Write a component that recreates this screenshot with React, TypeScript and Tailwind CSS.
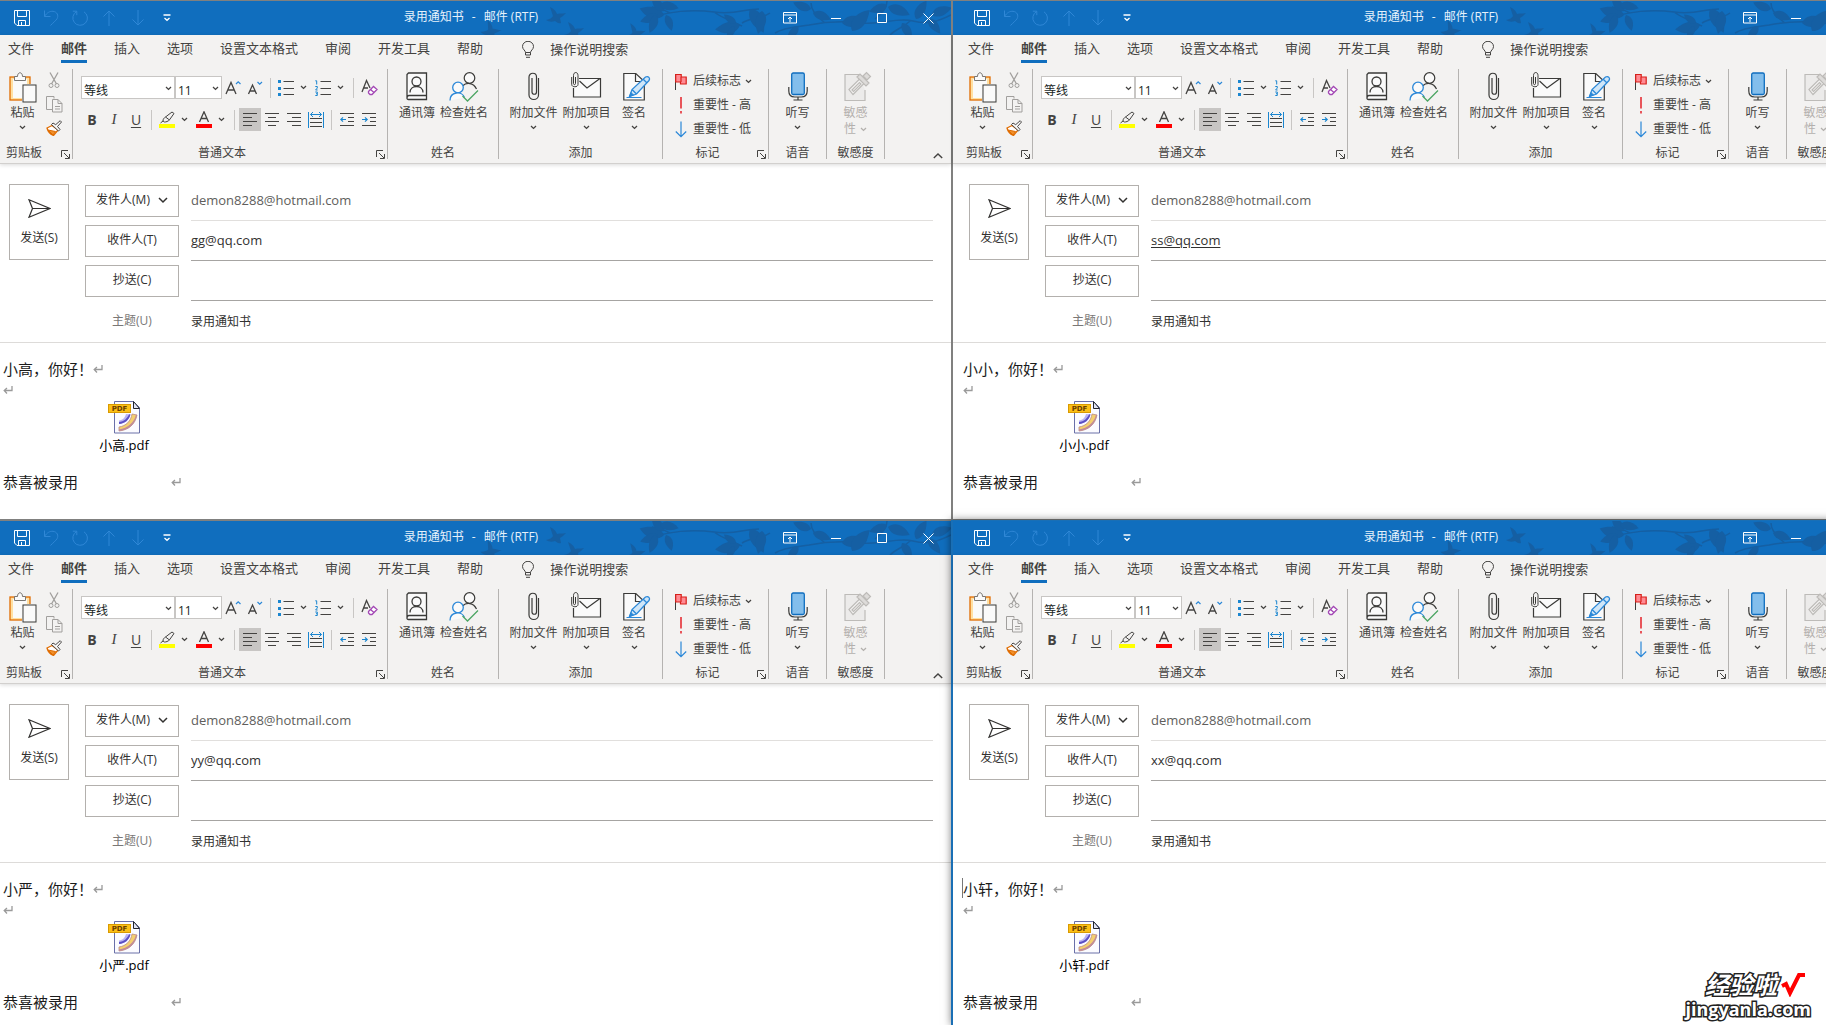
import type { ReactNode } from "react";
import clsx from "clsx";

type Mail = {
  name: string;
  to: string;
  underline?: boolean;
  caret?: boolean;
};

const mails: Mail[] = [
  { name: "小高", to: "gg@qq.com" },
  { name: "小小", to: "ss@qq.com", underline: true },
  { name: "小严", to: "yy@qq.com" },
  { name: "小轩", to: "xx@qq.com", caret: true },
];

const tabs = ["文件", "邮件", "插入", "选项", "设置文本格式", "审阅", "开发工具", "帮助"];

/* ---------- icons ---------- */

type IconProps = { w: number; h: number; className?: string; children: ReactNode };

function Icon({ w, h, className, children }: IconProps) {
  return (
    <svg width={w} height={h} viewBox={`0 0 ${w} ${h}`} fill="none" stroke="currentColor" className={clsx("shrink-0", className)} aria-hidden="true">
      {children}
    </svg>
  );
}

function Chevron({ className }: { className?: string }) {
  return (
    <Icon w={7} h={5} className={className}>
      <path d="M1 1l2.5 2.4L6 1" strokeWidth="1.3" />
    </Icon>
  );
}

function SaveIcon() {
  return (
    <Icon w={16} h={16}>
      <path d="M.5.5h15v15H3L.5 13zM3.5.5v6h9v-6M4.500 15.500v-5h7v5M7.500 12v3.500" />
    </Icon>
  );
}

function UndoIcon() {
  return (
    <Icon w={16} h={16}>
      <path d="M1.500.5v6h6M1.500 6.500C4 2.500 7 1 10 1.300c4 .4 6 4.200 4 7.500-1 1.600-4 4.200-6.500 6.700" />
    </Icon>
  );
}

function RedoIcon() {
  return (
    <Icon w={16} h={16}>
      <path d="M.8 1.200h4v4M4.800 1.500A7.300 7.300 0 1 0 12 1.800" />
    </Icon>
  );
}

function UpIcon() {
  return (
    <Icon w={12} h={16}>
      <path d="M6 16V1M.5 6.500L6 1l5.500 5.500" />
    </Icon>
  );
}

function DownIcon() {
  return (
    <Icon w={12} h={16}>
      <path d="M6 0v15M.5 9.500L6 15l5.500-5.500" />
    </Icon>
  );
}

function CustomizeIcon() {
  return (
    <Icon w={8} h={8}>
      <path d="M.5 1h7M1.500 4L4 6.300 6.500 4" strokeWidth="1.300" />
    </Icon>
  );
}

function BulbIcon() {
  return (
    <Icon w={12} h={17}>
      <path d="M3.500 11.500c0-2-3-3-3-6a5.500 5.200 0 0 1 11 0c0 3-3 4-3 6zM3.500 11.500v2.500h5v-2.500M4 16.300h4" />
    </Icon>
  );
}

function PasteIcon() {
  return (
    <Icon w={28} h={31}>
      <rect x="1" y="5" width="20" height="23" fill="#ffe0a3" stroke="#e06c00" strokeWidth="1.300" />
      <rect x="4" y="7" width="14" height="19" fill="#fafafa" stroke="none" />
      <path d="M5.500 8.500v-4h3c0-5 5-5 5 0h3v4z" fill="#fafafa" stroke="#797774" />
      <rect x="13" y="12" width="15" height="19" fill="#f3f2f1" stroke="none" />
      <rect x="14" y="13" width="13" height="17" fill="#fafafa" stroke="#3a3a38" />
    </Icon>
  );
}

function CutIcon() {
  return (
    <Icon w={12} h={17} className="text-[#a19f9d]">
      <path d="M2 .5l6.500 11.500M10 .5L3.500 12" strokeWidth="1.300" />
      <circle cx="3" cy="13.500" r="2" />
      <circle cx="9" cy="13.500" r="2" />
    </Icon>
  );
}

function CopyIcon() {
  return (
    <Icon w={17} h={17} className="text-[#a19f9d]">
      <path d="M6 13.500H.5V.5h7.500v2" />
      <path d="M6.500 3.500h5.500l4 4v8.500H6.500zM12 3.500v4h4M9 10.500h5M9 13h5" />
    </Icon>
  );
}

function BrushIcon() {
  return (
    <Icon w={16} h={16}>
      <path d="M6 5.500L1 8c1 4 3 6 6.500 7.500L12 10z" fill="#fff" stroke="#e06c00" strokeWidth="1.300" />
      <path d="M2 10l5 5 2.500-3.500z" fill="#f0912d" stroke="#e06c00" />
      <path d="M5.500 4.500l7 6.500 1.500-1.500-2.500-3 4-4.500-1.300-1.300-4.500 4L7 3z" fill="#fafafa" stroke="#484644" />
    </Icon>
  );
}

function LauncherIcon() {
  return (
    <Icon w={9} h={9}>
      <path d="M.5 7V.5H7M3 3l5 5M8.500 4v4.500H4" />
    </Icon>
  );
}

function GrowFont() {
  return (
    <Icon w={16} h={16}>
      <path d="M1 14L6 2.500 11 14M3 10h6" strokeWidth="1.300" />
      <path d="M11 4l2.200-2.200L15.500 4" stroke="#2b88d8" strokeWidth="1.200" />
    </Icon>
  );
}

function ShrinkFont() {
  return (
    <Icon w={16} h={16}>
      <path d="M1.500 14L5.500 5 9.500 14M3 11h5" strokeWidth="1.300" />
      <path d="M10.500 2l2.200 2.200L15 2" stroke="#2b88d8" strokeWidth="1.200" />
    </Icon>
  );
}

function BulletsIcon() {
  return (
    <Icon w={16} h={16}>
      <path d="M5.500 1.500H16M5.500 8.500H16M5.500 14.500H16" />
      <path d="M0 1.500h3M0 8.500h3M0 14.500h3" stroke="#1a86d0" strokeWidth="3" />
    </Icon>
  );
}

function NumbersIcon() {
  return (
    <Icon w={16} h={16}>
      <path d="M5.500 1.500H16M5.500 8.500H16M5.500 14.500H16" />
      <path d="M.3.8h1.400v3.700M.3 6.500h2v1.500l-1.700 2h2M.3 12h2v3.500H.3M1 13.700h1" stroke="#1a86d0" />
    </Icon>
  );
}

function ClearIcon() {
  return (
    <Icon w={17} h={17}>
      <path d="M1 13L5.500 1.500 9 9M2.500 9H7" strokeWidth="1.300" />
      <path d="M7.500 12.500l5-5 3.500 3-5 5h-2l-1.500-1.500zM9.500 10.500l3.500 3" fill="#fff" stroke="#a347b5" strokeWidth="1.300" />
    </Icon>
  );
}

function HighlightIcon() {
  return (
    <Icon w={16} h={17}>
      <path d="M4 10c0-2 1-3 2.500-4L13 1l2 1.500-4.500 6.300C9 10.500 7 11 5.500 11zM6.500 6l4 3M4 10l-2.500 2" />
      <path d="M0 15h16" stroke="#ff0" strokeWidth="4" />
    </Icon>
  );
}

function FontColorIcon() {
  return (
    <Icon w={16} h={17}>
      <path d="M3.500 11L8 .8 12.500 11M5 7.500h6" strokeWidth="1.300" />
      <path d="M0 15h16" stroke="#f00" strokeWidth="4" />
    </Icon>
  );
}

function AlignLeft() {
  return (
    <Icon w={15} h={14}>
      <path d="M0 .5h14M0 4.500h9M0 8.500h14M0 12.500h9" />
    </Icon>
  );
}

function AlignCenter() {
  return (
    <Icon w={15} h={14}>
      <path d="M0 .5h14M3 4.500h8M0 8.500h14M3 12.500h8" />
    </Icon>
  );
}

function AlignRight() {
  return (
    <Icon w={15} h={14}>
      <path d="M0 .5h14M5 4.500h9M0 8.500h14M5 12.500h9" />
    </Icon>
  );
}

function DistributeIcon() {
  return (
    <Icon w={16} h={16}>
      <path d="M2 6.500h12M2 10.500h12M2 14.500h12" />
      <path d="M.5 0v16M15.500 0v16M2.500 2.500h11M5 0L2.500 2.500 5 5M11 0l2.500 2.500L11 5" stroke="#1a86d0" />
    </Icon>
  );
}

function OutdentIcon() {
  return (
    <Icon w={15} h={14}>
      <path d="M0 .5h14M8 4.500h6M8 8.500h6M0 12.500h14" />
      <path d="M.8 6.500H6M3 4.300L.8 6.500 3 8.700" stroke="#1a86d0" strokeWidth="1.200" />
    </Icon>
  );
}

function IndentIcon() {
  return (
    <Icon w={15} h={14}>
      <path d="M0 .5h14M8 4.500h6M8 8.500h6M0 12.500h14" />
      <path d="M0 6.500h5.200M3 4.300l2.200 2.200L3 8.700" stroke="#1a86d0" strokeWidth="1.200" />
    </Icon>
  );
}

function AddressBookIcon() {
  return (
    <Icon w={22} h={30}>
      <path d="M1 26.500V2.500L2.500 1H20.500V27.500H2.500C1.500 27.500 1 27 1 26 1 24.500 2 23.500 3 23.500H20.500" fill="#fafafa" stroke="#3a3a38" strokeWidth="1.300" />
      <circle cx="10.500" cy="9.500" r="4.500" stroke="#3a3a38" strokeWidth="1.300" />
      <path d="M4 20.500c0-8 13-8 13 0" stroke="#3a3a38" strokeWidth="1.300" />
    </Icon>
  );
}

function CheckNamesIcon() {
  return (
    <Icon w={30} h={30}>
      <circle cx="20.500" cy="6" r="5.300" fill="#fafafa" stroke="#3a3a38" strokeWidth="1.200" />
      <path d="M13.500 14c4-4 11-3.500 14 3" stroke="#3a3a38" strokeWidth="1.200" />
      <circle cx="9" cy="15.500" r="5.300" fill="#fafafa" stroke="#2b88d8" strokeWidth="1.300" />
      <path d="M1 28.500c0-9 12-10 14.500-3" fill="#fafafa" stroke="#2b88d8" strokeWidth="1.300" />
      <path d="M13.500 24l5 5L29 18.500" stroke="#4ca564" strokeWidth="1.300" />
    </Icon>
  );
}

function ClipIcon() {
  return (
    <Icon w={12} h={30}>
      <path d="M8.500 9v11c0 3-4.500 3-4.500 0V6M10.500 6v17c0 6-9.500 6-9.500 0V5c0-5 7.500-5 7.500 0v4" stroke="#3a3a38" strokeWidth="1.200" />
    </Icon>
  );
}

function AttachItemIcon() {
  return (
    <Icon w={31} h={30}>
      <path d="M8 6.500h21.500v18.500H2.500V16" fill="#fafafa" stroke="#3a3a38" strokeWidth="1.200" />
      <path d="M8.500 9l7.500 7 13-9.500" stroke="#3a3a38" strokeWidth="1.200" />
      <path d="M4.500 5v6.500c0 1.500-2 1.500-2 0V3.500c0-4 4.500-4 4.500 0v9c0 3-6.300 3-6.300 0V5" stroke="#3a3a38" />
    </Icon>
  );
}

function SignatureIcon() {
  return (
    <Icon w={22} h={30} className="overflow-visible">
      <path d="M.8 1.500h12l8.500 8v18.500H.8z" fill="#fafafa" stroke="#3a3a38" strokeWidth="1.200" />
      <path d="M12.500 1.500v8h7" stroke="#3a3a38" strokeWidth="1.200" />
      <path d="M6.500 24.500L9 17.500 22.500 5c3-1.500 5 1.500 3.500 3.500L13.500 22zM20 7l4 4M9 17.500l4.500 4.500" fill="#cfe6f8" stroke="#2b88d8" strokeWidth="1.300" />
      <path d="M6.500 24.500l1.500-4 2.500 2.500zM3.500 25.500h15" fill="#2b88d8" stroke="#2b88d8" />
    </Icon>
  );
}

function MicIcon() {
  return (
    <Icon w={20} h={30}>
      <path d="M.8 15v4c0 4 2.500 6 6 6h6.400c3.500 0 6-2 6-6v-4M10 25v3M5.500 28h9" stroke="#3a3a38" strokeWidth="1.200" />
      <rect x="3.700" y="1" width="12.600" height="21.500" rx="1.500" fill="#83beec" stroke="#106ebe" strokeWidth="1.300" />
    </Icon>
  );
}

function SensitivityIcon() {
  return (
    <Icon w={24} h={31} className="overflow-visible text-[#bdbbb8]">
      <path d="M15 2.500H1v26h20V18" fill="#ecebea" strokeWidth="1.200" />
      <path d="M5 17.500L15.500 7l4.500 4.500L9 22.500zM8 18l7.500-7.500L17 12l-7.500 7.500z" fill="#f3f2f1" strokeWidth="1.200" />
      <path d="M13 5l3-3 9 9-3 3zM19 4l3.500-3.500 4 4L23 8z" fill="#dddbd9" strokeWidth="1.200" />
    </Icon>
  );
}

function FlagIcon() {
  return (
    <Icon w={12} h={17}>
      <path d="M.5 1v16" stroke="#3a3a38" />
      <path d="M.7 1.500h5.500v2.500h5v7H5.500V9H.7zM6 4v5" fill="#ff8b94" stroke="#d9201a" strokeWidth="1.200" />
    </Icon>
  );
}

function HighIcon() {
  return (
    <Icon w={12} h={17}>
      <path d="M6 0v11.500M6 14v2.500" stroke="#e8555a" strokeWidth="2" />
    </Icon>
  );
}

function LowIcon() {
  return (
    <Icon w={12} h={17}>
      <path d="M6 .5v15M.8 10.500L6 15.700l5.200-5.200" stroke="#2b88d8" strokeWidth="1.200" />
    </Icon>
  );
}

function SendIcon() {
  return (
    <Icon w={23} h={19}>
      <path d="M1 .8L22 9.500 1 18.200l3.500-8.700zM4.500 9.500H22" strokeWidth="1.200" />
    </Icon>
  );
}

function PdfIcon() {
  return (
    <svg width="33" height="33" viewBox="0 0 33 33" fill="none" aria-hidden="true">
      <path d="M6.500.5h19l6 6v25.500h-25z" fill="#fbfbff" stroke="#6a70a8" />
      <path d="M25.500.5v7h6z" fill="#dfe2f5" stroke="#22242c" />
      <path d="M11 30c9-1 16-6 18-16l-5-1c-1 7-6 12-13 13z" fill="#f4cf6e" stroke="#b98a86" strokeWidth=".8" />
      <path d="M11 30c9-1 16-6 18-16l-1-.2C26 22 20 27 11 28.500z" fill="#c08a9a" />
      <path d="M11 23c6-.5 10-4 11.500-9.500L18 13c-1 3.500-3 6-7 6.500z" fill="#b9b3f3" />
      <path d="M11 23c6-.5 10-4 11.500-9.500l-1.500-.2C19 18 16 20.500 11 21z" fill="#5a4fc4" />
      <rect x=".5" y="3.500" width="22" height="8" fill="#fbbf16" stroke="#d99a00" />
      <text x="11.500" y="10" textAnchor="middle" fontSize="7" fontWeight="700" fontFamily="DejaVu Sans, sans-serif" fill="#6b3d00">
        PDF
      </text>
    </svg>
  );
}

function ReturnMark() {
  return (
    <Icon w={10} h={9} className="text-[#9a9a9a]">
      <path d="M9 0v4.500H1M4 2L1.200 4.500 4 7.500" strokeWidth="1.300" />
    </Icon>
  );
}

function Leaf({ x, y, r, s = 1 }: { x: number; y: number; r: number; s?: number }) {
  return <path d="M0 0C4-7 13-7 21 0 13 5 5 6 0 0z" transform={`translate(${x} ${y}) rotate(${r}) scale(${s})`} />;
}

function Bird({ x, y, r = 0 }: { x: number; y: number; r?: number }) {
  return <path d="M0 10c4-1 6-2 7-4L4-3c4 2 6 4 7 7 3-1 5 0 9-1-2 2-4 4-6 5l1 5c-3 1-4-1-6-2-3 1-6 1-9-1z" transform={`translate(${x} ${y}) rotate(${r})`} />;
}

function TitleArt() {
  return (
    <svg width="471" height="34" viewBox="0 0 471 34" className="absolute right-0 top-0 text-[#155fa3]" fill="currentColor" aria-hidden="true">
      <Bird x={66} y={9} />
      <Bird x={3} y={21} r={15} />
      <Bird x={84} y={24} />
      <Bird x={146} y={25} r={5} />
      <g fill="none" stroke="currentColor" strokeWidth="1.500">
        <path d="M168 18c20-8 45-10 66-7s30-3 45-3M190 12c-8-4-14-6-18-6M234 11c8 6 20 10 28 14" />
        <path d="M295 32c10-6 22-6 34-8 20-4 36-4 54-2s34-6 50-2 26 0 38-6M262 22c10-6 20-4 28-10M345 22c-8-6-14-12-14-20M395 18c8-6 12-12 12-18M430 20c-6 6-14 8-20 14" />
      </g>
      <Leaf x={184} y={14} r={195} s={1.200} />
      <Leaf x={184} y={10} r={230} s={0.900} />
      <Leaf x={178} y={14} r={160} s={0.900} />
      <Leaf x={176} y={14} r={110} s={0.900} />
      <Leaf x={186} y={14} r={70} s={0.800} />
      <Leaf x={180} y={4} r={10} s={0.900} />
      <Leaf x={260} y={24} r={170} s={1.200} />
      <Leaf x={256} y={22} r={215} s={0.700} />
      <Leaf x={254} y={25} r={120} s={0.700} />
      <Leaf x={270} y={8} r={60} s={1.300} />
      <Leaf x={282} y={10} r={100} s={1.100} />
      <Leaf x={331} y={8} r={200} s={0.900} />
      <Leaf x={333} y={12} r={20} s={0.900} />
      <Leaf x={318} y={25} r={130} s={0.800} />
      <Leaf x={362} y={22} r={-5} s={1.200} />
      <Leaf x={372} y={30} r={-50} s={1.300} />
      <Leaf x={407} y={4} r={160} s={0.900} />
      <Leaf x={408} y={6} r={20} s={1.100} />
      <Leaf x={422} y={22} r={60} s={0.900} />
      <Leaf x={436} y={18} r={-60} s={1} />
      <Leaf x={452} y={14} r={-20} s={1} />
      <Leaf x={448} y={18} r={50} s={0.900} />
    </svg>
  );
}

/* ---------- ribbon pieces ---------- */

function Group({ label, launcher, className, children }: { label: string; launcher?: boolean; className?: string; children: ReactNode }) {
  return (
    <div className={clsx("relative flex h-[90px] shrink-0 flex-col border-r border-[#b5b3b1]", className)}>
      <div className="flex-1">{children}</div>
      <div className="text-center text-xs leading-3">{label}</div>
      {launcher && (
        <button aria-label={`${label}设置`} className="absolute bottom-0 right-[2px]">
          <LauncherIcon />
        </button>
      )}
    </div>
  );
}

function BigButton({ icon, label, menu, className }: { icon: ReactNode; label: string; menu?: boolean; className?: string }) {
  return (
    <button className={clsx("flex shrink-0 flex-col items-center whitespace-nowrap text-xs leading-4", className)}>
      <span className="flex h-9 items-start pt-[3px]">{icon}</span>
      {label}
      {menu && <Chevron className="mt-1" />}
    </button>
  );
}

function Tool({ label, active, children }: { label: string; active?: boolean; children: ReactNode }) {
  return (
    <button aria-label={label} className={clsx("flex h-[23px] w-[22px] shrink-0 items-center justify-center text-base", active && "bg-[#c8c6c4]")}>
      {children}
    </button>
  );
}

function Drop({ label }: { label: string }) {
  return (
    <button aria-label={label} className="flex h-[23px] w-[15px] shrink-0 items-center pl-[3px]">
      <Chevron />
    </button>
  );
}

function Sep() {
  return <div className="mx-1 h-5 w-px shrink-0 bg-[#c8c6c4]" />;
}

function Combo({ label, value, className }: { label: string; value: string; className: string }) {
  return (
    <div className={clsx("relative h-[23px] shrink-0 border border-[#c8c6c4] bg-white", className)}>
      <select aria-label={label} className="h-full w-full appearance-none pl-[2px] text-xs text-[#201f1e] outline-none">
        <option>{value}</option>
      </select>
      <Chevron className="pointer-events-none absolute right-[2px] top-[9px]" />
    </div>
  );
}

function TagRow({ icon, label, menu }: { icon: ReactNode; label: string; menu?: boolean }) {
  return (
    <button className="flex h-6 items-center gap-[6px] whitespace-nowrap text-xs">
      {icon}
      <span>{label}</span>
      {menu && <Chevron className="-ml-[2px]" />}
    </button>
  );
}

function Ribbon({ inset }: { inset: boolean }) {
  return (
    <div className={clsx("relative z-10 border-b border-[#d2d0ce] bg-[#f3f2f1] pb-1 text-[#444341] shadow-[0_1px_4px_rgba(0,0,0,0.15)]", inset && "pl-[7px]")}>
      <nav className="flex h-[34px] items-start gap-[27px] whitespace-nowrap pl-2 text-[13px]">
        {tabs.map((tab, i) => (
          <button key={tab} className={clsx("h-7 border-b-[3px] leading-[27px]", i === 1 ? "border-[#106ebe] font-bold" : "border-transparent")}>
            {tab}
          </button>
        ))}
        <button className="ml-3 flex h-7 items-center gap-4 leading-[27px]">
          <BulbIcon />
          <span>操作说明搜索</span>
        </button>
      </nav>

      <div className="flex">
        <Group label="剪贴板" launcher className="w-[73px] pr-6">
          <div className="flex">
            <BigButton icon={<PasteIcon />} label="粘贴" menu className="w-11 pl-px" />
            <div className="flex flex-col pl-[2px] [&>button]:flex [&>button]:h-6 [&>button]:items-center [&>button]:pb-[2px]">
              <button aria-label="剪切" className="pl-[2px]">
                <CutIcon />
              </button>
              <button aria-label="复制">
                <CopyIcon />
              </button>
              <button aria-label="格式刷">
                <BrushIcon />
              </button>
            </div>
          </div>
        </Group>

        <Group label="普通文本" launcher className="w-[315px] pr-4">
          <div className="flex flex-col gap-[9px] pl-2 pt-[7px]">
            <div className="flex items-center">
              <Combo label="字体" value="等线" className="w-[94px]" />
              <Combo label="字号" value="11" className="w-[47px]" />
              <Tool label="增大字号">
                <GrowFont />
              </Tool>
              <Tool label="减小字号">
                <ShrinkFont />
              </Tool>
              <Sep />
              <Tool label="项目符号">
                <BulletsIcon />
              </Tool>
              <Drop label="项目符号选项" />
              <Tool label="编号">
                <NumbersIcon />
              </Tool>
              <Drop label="编号选项" />
              <Sep />
              <Tool label="清除格式">
                <ClearIcon />
              </Tool>
            </div>
            <div className="flex items-center">
              <Tool label="加粗">
                <span className="text-sm font-bold">B</span>
              </Tool>
              <Tool label="倾斜">
                <span className="font-['Liberation_Serif',serif] text-[15px] italic">I</span>
              </Tool>
              <Tool label="下划线">
                <span className="text-sm underline underline-offset-2">U</span>
              </Tool>
              <Sep />
              <Tool label="突出显示">
                <HighlightIcon />
              </Tool>
              <Drop label="突出显示颜色" />
              <Tool label="字体颜色">
                <FontColorIcon />
              </Tool>
              <Drop label="字体颜色选项" />
              <Sep />
              <Tool label="左对齐" active>
                <AlignLeft />
              </Tool>
              <Tool label="居中">
                <AlignCenter />
              </Tool>
              <Tool label="右对齐">
                <AlignRight />
              </Tool>
              <Tool label="分散对齐">
                <DistributeIcon />
              </Tool>
              <Sep />
              <Tool label="减少缩进">
                <OutdentIcon />
              </Tool>
              <Tool label="增加缩进">
                <IndentIcon />
              </Tool>
            </div>
          </div>
        </Group>

        <Group label="姓名" className="w-[111px]">
          <div className="flex pl-[6px]">
            <BigButton icon={<AddressBookIcon />} label="通讯簿" className="w-[46px]" />
            <BigButton icon={<CheckNamesIcon />} label="检查姓名" className="w-12" />
          </div>
        </Group>

        <Group label="添加" className="w-[164px]">
          <div className="flex pl-2">
            <BigButton icon={<ClipIcon />} label="附加文件" menu className="w-[53px]" />
            <BigButton icon={<AttachItemIcon />} label="附加项目" menu className="w-[53px]" />
            <BigButton icon={<SignatureIcon />} label="签名" menu className="w-[42px]" />
          </div>
        </Group>

        <Group label="标记" launcher className="w-[106px] pr-4">
          <div className="flex flex-col pl-3">
            <TagRow icon={<FlagIcon />} label="后续标志" menu />
            <TagRow icon={<HighIcon />} label="重要性 - 高" />
            <TagRow icon={<LowIcon />} label="重要性 - 低" />
          </div>
        </Group>

        <Group label="语音" className="w-[58px]">
          <BigButton icon={<MicIcon />} label="听写" menu className="w-full" />
        </Group>

        <Group label="敏感度" className="w-[58px]">
          <button disabled className="flex w-full flex-col items-center text-xs leading-4 text-[#b3b0ad]">
            <span className="flex h-9 items-start pt-[3px]">
              <SensitivityIcon />
            </span>
            敏感
            <span className="flex items-center gap-1">
              性 <Chevron />
            </span>
          </button>
        </Group>

        <button aria-label="折叠功能区" className="ml-auto mr-2 self-end">
          <Icon w={10} h={6}>
            <path d="M.8 5L5 1l4.200 4" strokeWidth="1.400" />
          </Icon>
        </button>
      </div>
    </div>
  );
}

/* ---------- window ---------- */

function TitleBar({ inset }: { inset: boolean }) {
  return (
    <header className={clsx("relative flex h-[34px] items-center bg-[#106ebe] text-white", inset && "pl-[7px]")}>
      <TitleArt />
      <div className="relative flex items-center pl-[7px] [&>button]:flex [&>button]:w-[29px] [&>button]:justify-center">
        <button aria-label="保存">
          <SaveIcon />
        </button>
        <button aria-label="撤消" disabled className="text-[#2f87d6]">
          <UndoIcon />
        </button>
        <button aria-label="重做" disabled className="text-[#2f87d6]">
          <RedoIcon />
        </button>
        <button aria-label="上一项" disabled className="text-[#2f87d6]">
          <UpIcon />
        </button>
        <button aria-label="下一项" disabled className="text-[#2f87d6]">
          <DownIcon />
        </button>
        <button aria-label="自定义快速访问工具栏">
          <CustomizeIcon />
        </button>
      </div>
      <h1 className="relative flex flex-1 justify-center gap-2 pb-[2px] pr-[6px] text-xs text-[#e6f1fb]">
        <span>录用通知书</span>
        <span>-</span>
        <span>邮件 (RTF)</span>
      </h1>
      <div className="relative flex [&>button]:flex [&>button]:h-[34px] [&>button]:w-[46px] [&>button]:items-center [&>button]:justify-center">
        <button aria-label="功能区显示选项">
          <Icon w={14} h={12}>
            <path d="M.5.5h13v10.500H.5zM.5 3h13M7 10V5M5 7l2-2 2 2" />
          </Icon>
        </button>
        <button aria-label="最小化">
          <Icon w={10} h={10}>
            <path d="M0 5.500h10" />
          </Icon>
        </button>
        <button aria-label="最大化">
          <Icon w={10} h={10}>
            <path d="M.5.5h9v9h-9z" />
          </Icon>
        </button>
        <button aria-label="关闭">
          <Icon w={11} h={11}>
            <path d="M.5.5l10 10M10.500.5l-10 10" />
          </Icon>
        </button>
      </div>
    </header>
  );
}

function AddressPane({ mail, id }: { mail: Mail; id: string }) {
  const box = "flex h-8 w-[94px] shrink-0 items-center justify-center border border-[#b3b0ad] pb-[2px] text-xs text-[#323130]";
  const field = "h-10 min-w-0 flex-1 border-b bg-transparent pb-[2px] text-[13px] outline-none";
  return (
    <div className="flex pr-[18px] pt-[17px]">
      <button className="mt-[3px] flex h-[76px] w-[60px] shrink-0 flex-col items-center border border-[#b3b0ad] pt-[14px] text-xs text-[#323130]">
        <SendIcon />
        <span className="mt-3">发送(S)</span>
      </button>
      <div className="ml-4 flex flex-1 flex-col [&>div]:flex [&>div]:h-10 [&>div]:items-center [&>div]:gap-3">
        <div>
          <button className={clsx(box, "gap-2")}>
            发件人(M)
            <Icon w={10} h={7}>
              <path d="M1 1l4 4 4-4" strokeWidth="1.500" />
            </Icon>
          </button>
          <input aria-label="发件人" readOnly defaultValue="demon8288@hotmail.com" className={clsx(field, "border-[#e1dfdd] text-[#605e5c]")} />
        </div>
        <div>
          <button className={box}>收件人(T)</button>
          <input aria-label="收件人" defaultValue={mail.to} className={clsx(field, "border-[#a6a4a2] text-[#323130]", mail.underline && "underline underline-offset-2")} />
        </div>
        <div>
          <button className={box}>抄送(C)</button>
          <input aria-label="抄送" className={clsx(field, "border-[#a6a4a2] text-[#323130]")} />
        </div>
        <div>
          <label htmlFor={id} className="w-[94px] shrink-0 text-center text-xs text-[#7a7876]">
            主题(U)
          </label>
          <input id={id} defaultValue="录用通知书" className="h-10 min-w-0 flex-1 text-xs text-[#323130] outline-none" />
        </div>
      </div>
    </div>
  );
}

function MailBody({ mail }: { mail: Mail }) {
  return (
    <main className="pl-[3px] pt-[15px] text-[15px] leading-[22px] text-[#1b1b1b]">
      <p className="relative flex items-center">
        {mail.caret && <span className="absolute -left-px top-0 h-5 w-px bg-[#777]" />}
        <span>{mail.name}，你好！</span>
        <ReturnMark />
      </p>
      <p className="flex h-[21px] items-center">
        <ReturnMark />
      </p>
      <button className="ml-[95px] flex w-[52px] flex-col items-center whitespace-nowrap text-[13px] leading-[18px] text-black">
        <PdfIcon />
        <span className="mt-[2px]">{mail.name}.pdf</span>
      </button>
      <p className="mt-[17px] flex items-center gap-[93px]">
        恭喜被录用
        <ReturnMark />
      </p>
    </main>
  );
}

function MailWindow({ mail, index }: { mail: Mail; index: number }) {
  const right = index % 2 === 1;
  const active = index === 3;
  return (
    <section
      className={clsx(
        "min-w-0 border-t bg-white",
        right && "w-[calc(100%+85px)] border-l-2",
        index < 2 && "border-b pb-[26px]",
        active ? "relative z-20 border-[#1a6fb5] shadow-[0_0_8px_rgba(0,0,0,0.5)]" : "border-[#80807f]",
      )}
    >
      <TitleBar inset={right} />
      <Ribbon inset={right} />
      <div className={clsx("border-b border-[#dddbd9] pb-px", right ? "pl-4" : "pl-[9px]")}>
        <AddressPane mail={mail} id={`subject-${index}`} />
      </div>
      <div className={clsx(right && "pl-[7px]")}>
        <MailBody mail={mail} />
      </div>
    </section>
  );
}

function Watermark() {
  return (
    <div className="absolute bottom-1 right-[15px] z-30 flex flex-col items-end font-bold text-white [-webkit-text-stroke:3px_#222] [paint-order:stroke_fill]">
      <div className="flex items-center gap-1 pr-1 text-2xl leading-6">
        <span className="italic">经验啦</span>
        <svg width="26" height="24" viewBox="0 0 26 24" fill="none" aria-hidden="true">
          <path d="M1 13l4-2 4 9L18 2h6" stroke="#f00" strokeWidth="4" />
        </svg>
      </div>
      <div className="text-lg leading-6">jingyanla.com</div>
    </div>
  );
}

export default function App() {
  return (
    <div className="relative grid min-h-screen grid-cols-[951fr_875fr] grid-rows-[auto_1fr] overflow-hidden bg-white font-['Open_Sans','Noto_Sans_CJK_SC',sans-serif]">
      {mails.map((mail, i) => (
        <MailWindow key={mail.name} mail={mail} index={i} />
      ))}
      <Watermark />
    </div>
  );
}
